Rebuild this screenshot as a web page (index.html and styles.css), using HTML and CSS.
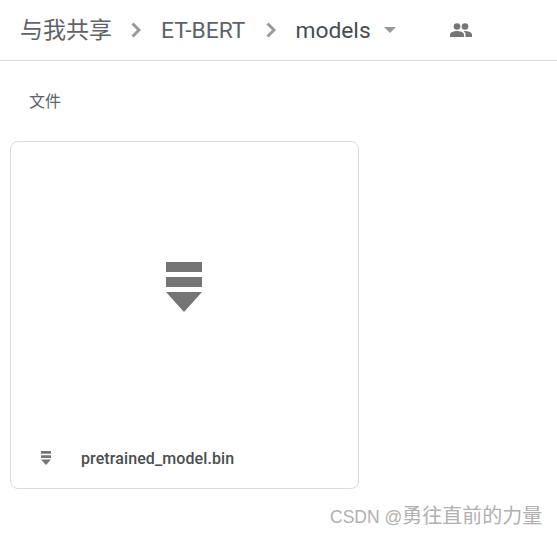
FILE: index.html
```html
<!DOCTYPE html>
<html lang="zh-CN">

<head>
  <meta charset="UTF-8">
  <meta name="viewport" content="width=device-width, initial-scale=1.0">
  <title>models - Google Drive</title>
  <link rel="stylesheet" href="styles.css">
</head>

<body>
  <header class="topbar">
    <span class="crumb crumb-root">与我共享</span>
    <svg class="chevron" viewBox="0 0 10 16"><path d="M1.5 1.5 8 8l-6.500 6.500" /></svg>
    <span class="crumb crumb-folder">ET-BERT</span>
    <svg class="chevron chevron-last" viewBox="0 0 10 16"><path d="M1.500 1.500 8 8l-6.500 6.500" /></svg>
    <span class="crumb crumb-current">models</span>
    <svg class="caret" viewBox="0 0 12 6"><path d="M0 0h12L6 6z" /></svg>
    <svg class="people" viewBox="0 0 22 14">
      <circle cx="7" cy="3.500" r="3.300" />
      <circle cx="15" cy="3.500" r="3.300" />
      <path d="M0 14v-2.500C0 9 4.500 8 7 8s7 1 7 3.500V14z" />
      <path d="M15.500 14v-2.500c0-1.500-.8-2.600-2-3.400.6-.1 1.100-.1 1.500-.1 2.500 0 7 1 7 3.500V14z" />
    </svg>
  </header>

  <main class="content">
    <h2 class="section-title">文件</h2>

    <div class="file-card">
      <div class="file-preview">
        <svg class="file-icon-large" viewBox="0 0 36 50">
          <path d="M0 0h36v10H0zM0 15h36v10H0zM0 30h36L18 50z" />
        </svg>
      </div>
      <div class="file-name-row">
        <svg class="file-icon-small" viewBox="0 0 36 50">
          <path d="M0 0h36v10H0zM0 15h36v10H0zM0 30h36L18 50z" />
        </svg>
        <span class="file-name">pretrained_model.bin</span>
      </div>
    </div>
  </main>

  <div class="watermark"><span class="watermark-latin">CSDN @</span>勇往直前的力量</div>
</body>

</html>
```

FILE: styles.css
```css
html, body {
  margin: 0;
  padding: 0;
  height: 100%;
  overflow: hidden;
  background: #fff;
  font-family: Roboto, "Noto Sans CJK SC", sans-serif;
}

.topbar {
  display: flex;
  align-items: center;
  height: 60px;
  padding-left: 20px;
  border-bottom: 1px solid #dadce0;
  color: #5f6368;
}

.crumb {
  padding-top: 1px;
  font-size: 22.800px;
  line-height: 60px;
  white-space: nowrap;
}

.crumb-root {
  font-size: 23px;
  margin-right: -1px;
}

.crumb-current {
  color: #4a4d50;
}

.chevron {
  width: 10px;
  height: 16px;
  margin: 0 20px;
  fill: none;
  stroke: #9a9a9a;
  stroke-width: 2.900;
}

.chevron-last {
  margin: 0 19px 0 21px;
}

.caret {
  width: 12px;
  height: 6px;
  margin-left: 13px;
  fill: #9a9a9a;
}

.people {
  width: 22px;
  height: 14px;
  margin-left: 54px;
  fill: #757575;
}

.content {
  padding: 32px 10px 0;
}

.section-title {
  margin: 0 0 30px 19px;
  font-size: 16px;
  font-weight: 400;
  line-height: 18px;
  color: #5f6368;
}

.file-card {
  display: flex;
  flex-direction: column;
  width: 347px;
  height: 346px;
  border: 1px solid #dadce0;
  border-radius: 8px;
}

.file-preview {
  display: flex;
  flex: 1;
  align-items: center;
  justify-content: center;
  padding: 4px 1px 0 0;
}

.file-icon-large {
  width: 36px;
  height: 50px;
  fill: #757575;
}

.file-name-row {
  display: flex;
  align-items: center;
  height: 60px;
  padding-left: 30px;
}

.file-icon-small {
  width: 10px;
  height: 14px;
  fill: #757575;
}

.file-name {
  margin-left: 30px;
  font-size: 16px;
  font-weight: 500;
  letter-spacing: 0.100px;
  color: #4a4d50;
}

.watermark {
  position: absolute;
  left: 330px;
  top: 504px;
  font-family: "Liberation Sans", "Noto Sans CJK SC", sans-serif;
  font-size: 20px;
  line-height: 24px;
  white-space: nowrap;
  color: #b0b0b0;
}

.watermark-latin {
  font-size: 17.500px;
}
```
